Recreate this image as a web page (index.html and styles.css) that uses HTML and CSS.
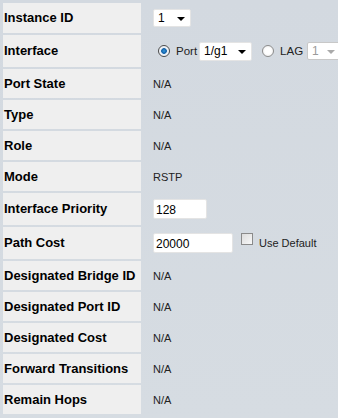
FILE: index.html
```html
<!DOCTYPE html>
<html lang="en">
<head>
    <meta charset="UTF-8">
    <title>Port Settings</title>
    <link rel="stylesheet" href="styles.css">
</head>
<body>

<table class="settings">
    <colgroup>
        <col class="col-label">
        <col class="col-value">
    </colgroup>
    <tr class="row-input">
        <td class="label">Instance ID</td>
        <td class="value">
            <div class="select sel-id"><span>1</span><span class="arrow"></span></div>
        </td>
    </tr>
    <tr class="row-tall">
        <td class="label">Interface</td>
        <td class="value">
            <div class="iface">
                <span class="radio checked"></span>
                <span class="opt">Port</span>
                <div class="select sel-port"><span>1/g1</span><span class="arrow"></span></div>
                <span class="radio"></span>
                <span class="opt">LAG</span>
                <div class="select sel-lag disabled"><span>1</span><span class="arrow"></span></div>
            </div>
        </td>
    </tr>
    <tr><td class="label">Port State</td><td class="value">N/A</td></tr>
    <tr><td class="label">Type</td><td class="value">N/A</td></tr>
    <tr><td class="label">Role</td><td class="value">N/A</td></tr>
    <tr><td class="label">Mode</td><td class="value">RSTP</td></tr>
    <tr class="row-tall">
        <td class="label">Interface Priority</td>
        <td class="value"><div class="textbox tb-prio">128</div></td>
    </tr>
    <tr class="row-tall">
        <td class="label">Path Cost</td>
        <td class="value">
            <div class="iface">
                <div class="textbox tb-cost">20000</div>
                <span class="check"></span>
                <span class="opt">Use Default</span>
            </div>
        </td>
    </tr>
    <tr><td class="label">Designated Bridge ID</td><td class="value">N/A</td></tr>
    <tr><td class="label">Designated Port ID</td><td class="value">N/A</td></tr>
    <tr><td class="label">Designated Cost</td><td class="value">N/A</td></tr>
    <tr><td class="label">Forward Transitions</td><td class="value">N/A</td></tr>
    <tr><td class="label">Remain Hops</td><td class="value">N/A</td></tr>
</table>

</body>
</html>
```

FILE: styles.css
```css
* {
    margin: 0;
    padding: 0;
    box-sizing: border-box;
}

body {
    font-family: "Liberation Sans", Arial, sans-serif;
    background: linear-gradient(to bottom, #d3d9e0, #d6dce2);
    color: #000;
    height: 418px;
    overflow: hidden;
}

/* Settings table */
.settings {
    border-collapse: separate;
    border-spacing: 0 2px;
    margin: 1px 0 0 3px;
    table-layout: fixed;
    width: 335px;
}

.col-label {
    width: 138px;
}

.settings tr {
    height: 29px;
}

.settings tr.row-input {
    height: 30px;
}

.settings tr.row-tall {
    height: 32px;
}

.label {
    background-color: #efefef;
    font-size: 13px;
    font-weight: bold;
    padding: 0 0 1px 1px;
    white-space: nowrap;
    vertical-align: middle;
}

.value {
    font-size: 11px;
    color: #222;
    padding-left: 12px;
    vertical-align: middle;
    overflow: hidden;
    white-space: nowrap;
}

/* Fake form controls */
.select {
    display: flex;
    flex-shrink: 0;
    align-items: center;
    justify-content: space-between;
    height: 18px;
    background: #fff;
    border: 1px solid #e4e4e4;
    border-radius: 2px;
    font-size: 12px;
    color: #000;
    padding: 0 5px 0 4px;
}

.sel-id {
    width: 38px;
}

.sel-port {
    width: 53px;
    height: 19px;
}

.sel-lag {
    width: 34px;
    margin-left: 2px;
}

.select.disabled {
    color: #9a9a9a;
    border-color: #c8c8c8;
}

.arrow {
    width: 0;
    height: 0;
    border-left: 4px solid transparent;
    border-right: 4px solid transparent;
    border-top: 4px solid #000;
    margin-top: 2px;
}

.disabled .arrow {
    border-top-color: #aaa;
}

.iface {
    display: flex;
    align-items: center;
}

.radio {
    flex-shrink: 0;
    width: 12px;
    height: 12px;
    border-radius: 50%;
    border: 1px solid #8c8c8c;
    background: radial-gradient(circle, #fff 40%, #e6e6e6 100%);
    margin-left: 5px;
}

.radio.checked {
    background: radial-gradient(circle, #3a9ad9 0, #0e5ea8 35%, #e8eef4 45%, #fff 100%);
    border-color: #4a4a4a;
}

.radio + .opt {
    margin: 0 2px 0 6px;
    color: #222;
    font-size: 11.5px;
}

.radio:not(.checked) {
    margin-left: 10px;
}

.textbox {
    flex-shrink: 0;
    height: 20px;
    background: #fff;
    border: 1px solid #e4e4e4;
    border-radius: 2px;
    font-size: 12px;
    color: #000;
    padding: 3px 0 0 2px;
}

.tb-prio {
    width: 54px;
}

.tb-cost {
    width: 80px;
}

.check {
    flex-shrink: 0;
    width: 12px;
    height: 12px;
    border: 1px solid #8a8a8a;
    background: linear-gradient(135deg, #dcdcdc, #f8f8f8);
    margin: -8px 0 0 8px;
}

.check + .opt {
    margin-left: 6px;
    font-size: 11px;
    color: #222;
}
```
